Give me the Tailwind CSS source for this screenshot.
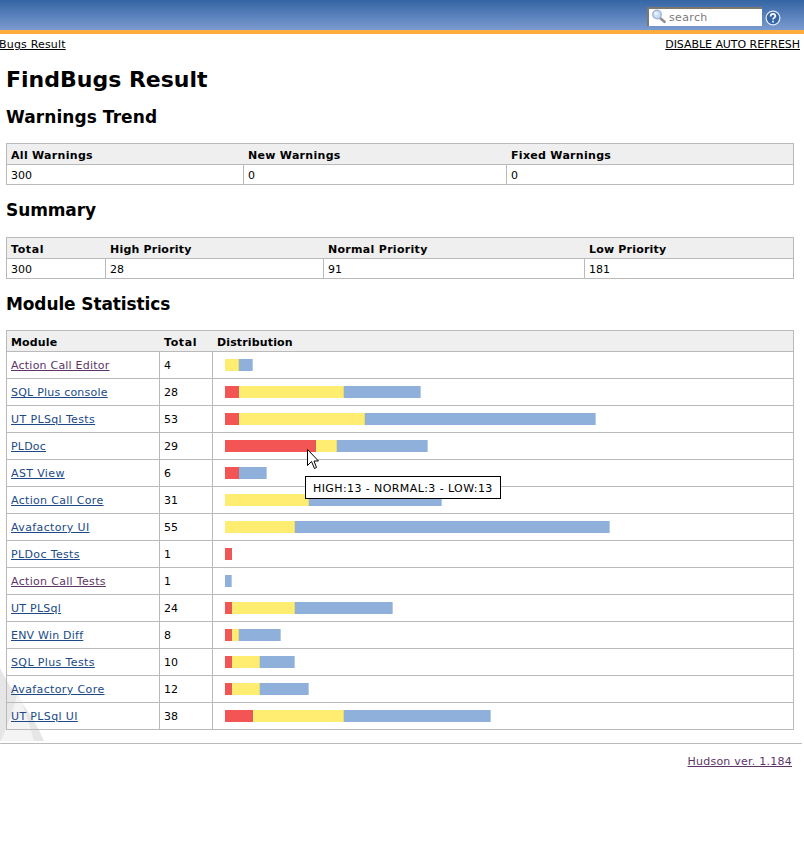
<!DOCTYPE html>
<html lang="en">
<head>
<meta charset="utf-8">
<title>FindBugs Result</title>
<script src="https://cdn.jsdelivr.net/npm/@tailwindcss/browser@4"></script>
</head>
<body class="relative h-[867px] overflow-hidden bg-white font-['DejaVu_Sans',sans-serif] text-[11px] leading-[14px] text-black">
<header class="flex h-[34px] items-start justify-end border-b-4 border-[#ffab3d] bg-linear-to-b from-[#3465a4] to-[#7b9bd0] pt-[7px] pr-[23px]">
  <div class="flex h-[19px] w-[115px] items-center gap-[2px] border-t-2 border-l-2 border-[#7b7870] bg-white pl-[2px] tracking-[0.35px] text-[#7a7a7a]">
    <svg class="mb-[2px] h-4 w-4 shrink-0" viewBox="0 0 16 16"><path d="M9.5 9.5l4 3.3" stroke="#909090" stroke-width="2.6" stroke-linecap="round"/><circle cx="6" cy="5.5" r="4.2" fill="#c9dffa" stroke="#a3b4d4" stroke-width="1.5"/><circle cx="5" cy="4.5" r="1.6" fill="#f1f7ff"/></svg>
    <span>search</span>
  </div>
  <svg class="mt-[3px] ml-[3px] h-4 w-4" viewBox="0 0 16 16"><circle cx="8" cy="8" r="6.9" fill="#3465a4" stroke="#dfe8f5" stroke-width="1.3"/><path d="M5.6 6.4C5.6 3.2 10.4 3.2 10.4 6.1C10.4 7.8 8 7.6 8 9.6M8 10.8v1.7" fill="none" stroke="#fff" stroke-width="1.7"/></svg>
</header>
<nav class="flex h-[22px] justify-between pt-[4px] pr-[4px]"><a class="-ml-px tracking-[0.18px] underline underline-offset-1">Bugs Result</a><a class="tracking-[-0.05px] underline underline-offset-1">DISABLE AUTO REFRESH</a></nav>
<svg class="absolute top-[666px] left-0 h-[75px] w-[45px]" viewBox="0 0 45 75"><path d="M0 2C12 28 32 45 44 75H0Z" fill="#e6e6e6"/><path d="M18 26C24 42 30 60 34 75H1C8 58 14 42 18 26Z" fill="#f4f4f4"/></svg>
<main class="relative mr-[10px] ml-[6px]">
  <h1 class="h-[47px] pt-[10px] text-[22px] leading-[28px] font-bold">FindBugs Result</h1>
  <h2 class="h-[40px] pt-[3px] text-[17px] leading-[22px] font-bold tracking-[0.07px]">Warnings Trend</h2>
  <section class="border border-[#bababa]">
    <div class="grid h-5 grid-cols-[237px_263px_1fr] bg-[#efefef] pt-[5px] tracking-[0.3px]"><b class="pl-1">All Warnings</b><b class="pl-1">New Warnings</b><b class="pl-1">Fixed Warnings</b></div>
    <div class="grid h-5 grid-cols-[237px_263px_1fr] overflow-hidden border-t border-[#bababa] bg-white leading-[21px]"><span class="border-r border-[#bababa] pl-1">300</span><span class="border-r border-[#bababa] pl-1">0</span><span class="pl-1">0</span></div>
  </section>
  <h2 class="h-[52px] pt-[14px] text-[17px] leading-[22px] font-bold tracking-[-0.1px]">Summary</h2>
  <section class="border border-[#bababa]">
    <div class="grid h-5 grid-cols-[99px_218px_261px_1fr] bg-[#efefef] pt-[5px] tracking-[0.3px]"><b class="pl-1 tracking-[0.6px]">Total</b><b class="pl-1 tracking-[0.2px]">High Priority</b><b class="pl-1">Normal Priority</b><b class="pl-1 tracking-[0.2px]">Low Priority</b></div>
    <div class="grid h-5 grid-cols-[99px_218px_261px_1fr] overflow-hidden border-t border-[#bababa] bg-white leading-[21px]"><span class="border-r border-[#bababa] pl-1">300</span><span class="border-r border-[#bababa] pl-1">28</span><span class="border-r border-[#bababa] pl-1">91</span><span class="pl-1">181</span></div>
  </section>
  <h2 class="h-[51px] pt-[14px] text-[17px] leading-[22px] font-bold tracking-[-0.12px]">Module Statistics</h2>
  <section class="border border-[#bababa]">
    <div class="grid h-5 grid-cols-[153px_53px_1fr] bg-[#efefef] pt-[5px] tracking-[0.14px]"><b class="pl-1">Module</b><b class="pl-1 tracking-[0.6px]">Total</b><b class="pl-1">Distribution</b></div>
    <div id="modules"></div>
  </section>
</main>
<footer class="mt-[13px] mr-[2px] border-t border-[#bababa] pt-[11px] pr-[10px] text-right tracking-[0.24px] text-[#5c3566]"><a class="underline underline-offset-1">Hudson ver. 1.184</a></footer>
<script>
const modules = [
  ['Action Call Editor', 0, 2, 2, .22, true], ['SQL Plus console', 2, 15, 11, .22], ['UT PLSql Tests', 2, 18, 33, .37],
  ['PLDoc', 13, 3, 13, .2], ['AST View', 2, 0, 4, .37], ['Action Call Core', 0, 12, 19, .32], ['Avafactory UI', 0, 10, 45, .38],
  ['PLDoc Tests', 1, 0, 0, .36], ['Action Call Tests', 0, 0, 1, .32, true], ['UT PLSql', 1, 9, 14, .25], ['ENV Win Diff', 1, 1, 6, .22],
  ['SQL Plus Tests', 1, 4, 5, .38], ['Avafactory Core', 1, 4, 7, .38], ['UT PLSql UI', 4, 13, 21, .36]];
const colors = ['bg-[#f35454] border-[#cf6262]', 'bg-[#ffed72] border-[#e8da78]', 'bg-[#8fb0da] border-[#b6cbe6]'];
document.getElementById('modules').innerHTML = modules.map(([name, h, n, l, spacing, visited]) => `
  <div class="grid h-[27px] grid-cols-[153px_53px_1fr] overflow-hidden border-t border-[#bababa] leading-[27px]">
    <span class="border-r border-[#bababa] pl-1"><a class="underline underline-offset-1 ${visited ? 'text-[#5c3566]' : 'text-[#204a87]'}" style="letter-spacing:${spacing}px">${name}</a></span>
    <span class="border-r border-[#bababa] pl-1">${h + n + l}</span>
    <span class="flex items-start pt-[7px] pl-[12px]">${[h, n, l].map((v, i) => v ? `<i class="h-3 border-r ${colors[i]}" style="width:${v * 7}px"></i>` : '').join('')}</span>
  </div>`).join('');
</script>
<div class="absolute top-[476px] left-[305px] h-[23px] w-[196px] border border-black bg-white pl-[7px] leading-[23px] tracking-[0.41px] whitespace-nowrap">HIGH:13 - NORMAL:3 - LOW:13</div>
<svg class="absolute top-[449px] left-[307px] h-[21px] w-[12px]" viewBox="0 0 12 21"><path d="M.5 .5V16.5L4.5 12.5L7.5 19.5L9.5 18.5L7 12H11.5Z" fill="#fff" stroke="#000"/></svg>
</body>
</html>
